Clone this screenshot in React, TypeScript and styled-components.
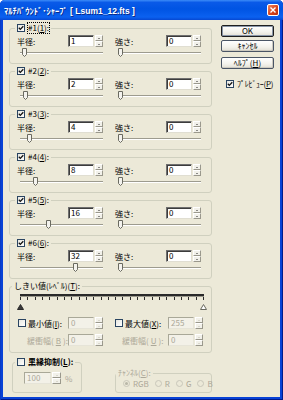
import React from "react";
import styled, { createGlobalStyle } from "styled-components";

const GlobalStyle = createGlobalStyle`
  html, body {
    margin: 0;
    padding: 0;
    background: #ffffff;
  }
  body {
    font-family: "Noto Sans CJK JP", "Liberation Sans", sans-serif;
    font-size: 8px;
    color: #000;
  }
`;

const FACE = "#ECE9D8";
const GREY_TEXT = "#ACA899";

const Window = styled.div`
  width: 283px;
  height: 400px;
  box-sizing: border-box;
  display: flex;
  flex-direction: column;
  border-radius: 5px 5px 0 0;
  overflow: hidden;
  background: #0842d6;
  box-shadow: inset 1px 0 #0a3bc4, inset -1px 0 #001b8c, inset 0 -1px #001b8c;
`;

const TitleBar = styled.div`
  height: 20px;
  flex: none;
  display: flex;
  align-items: center;
  padding: 0 4px 0 4px;
  background: linear-gradient(
    to bottom,
    #3c8cf8 0%,
    #0a5ae8 12%,
    #0054e3 45%,
    #0b61f0 85%,
    #0648d2 100%
  );
`;

const Title = styled.span`
  flex: 1;
  color: #fff;
  font-family: "Liberation Sans", "Noto Sans CJK JP", sans-serif;
  font-weight: bold;
  font-size: 8.5px;
  white-space: nowrap;
  text-shadow: 1px 1px #0a2a8a;
`;

const CloseButton = styled.div`
  width: 12px;
  height: 12px;
  box-sizing: border-box;
  margin-top: -1px;
  border: 1px solid #fff;
  border-radius: 2px;
  background: linear-gradient(to bottom right, #f08660, #d9451c 55%, #b8300e);
  display: flex;
  align-items: center;
  justify-content: center;
`;

const Client = styled.div`
  flex: 1;
  display: flex;
  margin: 0 3px 3px 3px;
  background: ${FACE};
`;

const LeftColumn = styled.div`
  width: 203px;
  margin-left: 6px;
  padding-top: 3px;
  display: flex;
  flex-direction: column;
  gap: 2px;
`;

const RightColumn = styled.div`
  width: 53px;
  margin-left: 9px;
  padding-top: 5px;
  display: flex;
  flex-direction: column;
`;

const Group = styled.div<{ $pl?: number; $pr?: number; $pb?: number; $w?: number }>`
  border: 1px solid #d0d0bf;
  border-radius: 3px;
  margin-top: 5px;
  padding: 0 ${(p) => p.$pr ?? 10}px ${(p) => p.$pb ?? 6}px ${(p) => p.$pl ?? 7}px;
  display: flex;
  flex-direction: column;
  ${(p) => (p.$w ? `width: ${p.$w}px; box-sizing: border-box;` : "")}
`;

const Legend = styled.div<{ $ml?: number; $disabled?: boolean; $bold?: boolean }>`
  align-self: flex-start;
  display: flex;
  align-items: center;
  gap: 3px;
  height: 10px;
  line-height: 10px;
  padding: 0 2px;
  margin: -6px 0 0 ${(p) => p.$ml ?? -2}px;
  background: ${FACE};
  color: ${(p) => (p.$disabled ? GREY_TEXT : "#000")};
  font-weight: ${(p) => (p.$bold ? "bold" : "normal")};
  white-space: nowrap;
`;

const LegendText = styled.span<{ $focus?: boolean }>`
  outline: ${(p) => (p.$focus ? "1px dotted #000" : "none")};
  outline-offset: 0;
`;

const Box = styled.span<{ $disabled?: boolean }>`
  width: 8px;
  height: 8px;
  flex: none;
  box-sizing: border-box;
  border: 1px solid ${(p) => (p.$disabled ? "#c9c7ba" : "#2a4461")};
  background: ${(p) => (p.$disabled ? FACE : "linear-gradient(135deg, #e6e6e0, #ffffff)")};
  display: flex;
  align-items: center;
  justify-content: center;
`;

function CheckBox({ checked, disabled }: { checked?: boolean; disabled?: boolean }) {
  return (
    <Box $disabled={disabled}>
      {checked && (
        <svg width="6" height="6" viewBox="0 0 6 6">
          <path d="M0.8 2.8 L2.3 4.4 L5.3 1.2" fill="none" stroke="#111" strokeWidth="1.3" />
        </svg>
      )}
    </Box>
  );
}

const Row = styled.div<{ $mt?: number; $gap?: number }>`
  display: flex;
  gap: ${(p) => p.$gap ?? 12}px;
  margin-top: ${(p) => p.$mt ?? 2}px;
  height: 12px;
`;

const Field = styled.div`
  display: flex;
  align-items: center;
`;

const FieldLabel = styled.span<{ $w: number; $pl?: number; $disabled?: boolean }>`
  width: ${(p) => p.$w}px;
  box-sizing: border-box;
  padding-left: ${(p) => p.$pl ?? 0}px;
  display: flex;
  align-items: center;
  gap: 2px;
  white-space: nowrap;
  color: ${(p) => (p.$disabled ? GREY_TEXT : "#000")};
`;

const TextBox = styled.div<{ $disabled?: boolean; $w?: number }>`
  width: ${(p) => p.$w ?? 26}px;
  height: 12px;
  box-sizing: border-box;
  border: 1px solid;
  border-color: ${(p) =>
    p.$disabled ? "#a9a898 #e6e4d8 #e6e4d8 #a9a898" : "#6f6f6f #e0ded2 #e0ded2 #6f6f6f"};
  box-shadow: ${(p) => (p.$disabled ? "none" : "inset 1px 1px #3c3c3c")};
  background: ${(p) => (p.$disabled ? "#f3f1e8" : "#fff")};
  color: ${(p) => (p.$disabled ? GREY_TEXT : "#000")};
  padding-left: 2px;
  line-height: 10px;
  font-size: 8px;
`;

const SpinBox = styled.div<{ $w?: number }>`
  width: ${(p) => p.$w ?? 8}px;
  height: 12px;
  margin-left: 1px;
  display: flex;
  flex-direction: column;
`;

const SpinButton = styled.div`
  flex: 1;
  box-sizing: border-box;
  border: 1px solid;
  border-color: #ffffff #9a988c #9a988c #ffffff;
  background: #f2f1ea;
  display: flex;
  align-items: center;
  justify-content: center;
`;

const Arrow = styled.span<{ $up?: boolean; $disabled?: boolean }>`
  width: 0;
  height: 0;
  border-left: 1px solid transparent;
  border-right: 1px solid transparent;
  ${(p) =>
    p.$up
      ? `border-bottom: 1px solid ${p.$disabled ? "#c0bead" : "#222"};`
      : `border-top: 1px solid ${p.$disabled ? "#c0bead" : "#222"};`}
`;

function Spin({ disabled, w }: { disabled?: boolean; w?: number }) {
  return (
    <SpinBox $w={w}>
      <SpinButton>
        <Arrow $up $disabled={disabled} />
      </SpinButton>
      <SpinButton>
        <Arrow $disabled={disabled} />
      </SpinButton>
    </SpinBox>
  );
}

const SliderRow = styled.div`
  display: flex;
  gap: 15px;
  height: 10px;
  padding-left: 3px;
`;

const Slider = styled.div`
  position: relative;
  width: 83px;
  height: 10px;
`;

const Track = styled.div`
  margin-top: 5px;
  height: 2px;
  box-sizing: border-box;
  border-top: 1px solid #9d9b8e;
  border-bottom: 1px solid #ffffff;
`;

const Thumb = styled.svg`
  position: absolute;
  top: 1px;
`;

function TrackBar({ value }: { value: number }) {
  return (
    <Slider>
      <Track />
      <Thumb width="5" height="9" viewBox="0 0 5 9" style={{ left: value * 1.645 }}>
        <path d="M0.5 0.5 H4.5 V6.5 L2.5 8.5 L0.5 6.5 Z" fill="#f4f3ee" stroke="#6a6a60" />
      </Thumb>
    </Slider>
  );
}

const Ruler = styled.div`
  position: relative;
  width: 184px;
  height: 20px;
  margin-left: 3px;
`;

const RulerTrack = styled.div`
  margin-top: 3px;
  height: 2px;
  background: #2a2a2a;
  border-bottom: 1px solid #9a988c;
`;

const RulerTicks = styled.div`
  height: 3px;
  background: repeating-linear-gradient(
    to right,
    #2a2a2a 0,
    #2a2a2a 1px,
    transparent 1px,
    transparent 7.32px
  );
  border-right: 1px solid #2a2a2a;
`;

const RulerThumb = styled.svg`
  position: absolute;
  top: 13px;
`;

const BottomRow = styled.div`
  display: flex;
  align-items: flex-end;
  justify-content: space-between;
  margin-top: 2px;
`;

const Percent = styled.span`
  margin-left: 4px;
  color: ${GREY_TEXT};
`;

const RadioRow = styled.div`
  display: flex;
  align-items: center;
  gap: 6px;
  margin-top: 1px;
  height: 8px;
`;

const RadioItem = styled.span`
  display: flex;
  align-items: center;
  gap: 3px;
  color: ${GREY_TEXT};
`;

const RadioCircle = styled.span<{ $on?: boolean }>`
  width: 7px;
  height: 7px;
  box-sizing: border-box;
  border-radius: 50%;
  border: 1px solid #c9c7ba;
  background: ${FACE};
  display: flex;
  align-items: center;
  justify-content: center;
  &::after {
    content: "";
    width: 3px;
    height: 3px;
    border-radius: 50%;
    background: ${(p) => (p.$on ? "#b9b7a8" : "transparent")};
  }
`;

const Button = styled.div<{ $default?: boolean; $mt?: number }>`
  height: 12px;
  box-sizing: border-box;
  margin-top: ${(p) => p.$mt ?? 0}px;
  border: 1px solid ${(p) => (p.$default ? "#1e1e1e" : "#4a5566")};
  border-radius: 2px;
  box-shadow: ${(p) => (p.$default ? "inset 0 0 0 1px #8a96a8" : "inset -1px -1px #cdcac0")};
  background: linear-gradient(to bottom, #ffffff, #f3f2ec 60%, #e2dfd4);
  display: flex;
  align-items: center;
  justify-content: center;
  line-height: 10px;
  white-space: nowrap;
`;

const Preview = styled.div`
  display: flex;
  align-items: center;
  gap: 3px;
  margin-top: 9px;
  padding-left: 5px;
  white-space: nowrap;
  letter-spacing: -0.3px;
`;

function SharpGroup({ index, radius, focused }: { index: number; radius: number; focused?: boolean }) {
  return (
    <Group>
      <Legend>
        <CheckBox checked />
        <LegendText $focus={focused}>
          #{index}(<u>{index}</u>):
        </LegendText>
      </Legend>
      <Row>
        <Field>
          <FieldLabel $w={51}>半径:</FieldLabel>
          <TextBox>{radius}</TextBox>
          <Spin />
        </Field>
        <Field>
          <FieldLabel $w={51}>強さ:</FieldLabel>
          <TextBox>0</TextBox>
          <Spin />
        </Field>
      </Row>
      <SliderRow>
        <TrackBar value={radius} />
        <TrackBar value={0} />
      </SliderRow>
    </Group>
  );
}

const radii = [1, 2, 4, 8, 16, 32];

export default function App() {
  return (
    <>
      <GlobalStyle />
      <Window>
        <TitleBar>
          <Title>ﾏﾙﾁﾊﾞｳﾝﾄﾞ･ｼｬｰﾌﾟ [ Lsum1_12.fts ]</Title>
          <CloseButton>
            <svg width="6" height="6" viewBox="0 0 6 6">
              <path d="M0.5 0.5 L5.5 5.5 M5.5 0.5 L0.5 5.5" stroke="#fff" strokeWidth="1.4" />
            </svg>
          </CloseButton>
        </TitleBar>
        <Client>
          <LeftColumn>
            {radii.map((r, i) => (
              <SharpGroup key={r} index={i + 1} radius={r} focused={i === 0} />
            ))}

            <Group $pr={8}>
              <Legend $ml={-5}>
                <span>
                  しきい値(ﾚﾍﾞﾙ)(<u>T</u>):
                </span>
              </Legend>
              <Ruler>
                <RulerTrack />
                <RulerTicks />
                <RulerThumb width="7" height="6" viewBox="0 0 7 6" style={{ left: -3 }}>
                  <path d="M3.5 0.5 L6.5 5.5 H0.5 Z" fill="#3a3a3a" stroke="#2a2a2a" />
                </RulerThumb>
                <RulerThumb width="7" height="6" viewBox="0 0 7 6" style={{ left: 180 }}>
                  <path d="M3.5 0.5 L6.5 5.5 H0.5 Z" fill="#ffffff" stroke="#6a6a60" />
                </RulerThumb>
              </Ruler>
              <Row $mt={6}>
                <Field>
                  <FieldLabel $w={51} $pl={1}>
                    <CheckBox />
                    <span>
                      最小値(<u>I</u>):
                    </span>
                  </FieldLabel>
                  <TextBox $disabled>0</TextBox>
                  <Spin disabled />
                </Field>
                <Field>
                  <FieldLabel $w={53}>
                    <CheckBox />
                    <span>
                      最大値(<u>X</u>):
                    </span>
                  </FieldLabel>
                  <TextBox $disabled>255</TextBox>
                  <Spin disabled />
                </Field>
              </Row>
              <Row $mt={5}>
                <Field>
                  <FieldLabel $w={51} $pl={10} $disabled>
                    緩衝幅(<u>B</u>):
                  </FieldLabel>
                  <TextBox $disabled>0</TextBox>
                  <Spin disabled />
                </Field>
                <Field>
                  <FieldLabel $w={53} $pl={7} $disabled>
                    緩衝幅(<u>U</u>):
                  </FieldLabel>
                  <TextBox $disabled>0</TextBox>
                  <Spin disabled />
                </Field>
              </Row>
            </Group>

            <BottomRow>
              <Group $w={70} $pl={11} $pr={4} $pb={8} style={{ marginLeft: 3 }}>
                <Legend $ml={-9} $bold>
                  <CheckBox />
                  <span>
                    黒縁抑制(<u>L</u>):
                  </span>
                </Legend>
                <Row $mt={5} $gap={0}>
                  <Field>
                    <TextBox $disabled $w={27}>
                      100
                    </TextBox>
                    <Spin disabled w={9} />
                    <Percent>%</Percent>
                  </Field>
                </Row>
              </Group>
              <Group $w={97} $pl={7} $pr={4} $pb={5}>
                <Legend $ml={-7} $disabled>
                  <span>
                    ﾁｬﾝﾈﾙ(<u>C</u>):
                  </span>
                </Legend>
                <RadioRow>
                  <RadioItem>
                    <RadioCircle $on />
                    RGB
                  </RadioItem>
                  <RadioItem>
                    <RadioCircle />R
                  </RadioItem>
                  <RadioItem>
                    <RadioCircle />G
                  </RadioItem>
                  <RadioItem>
                    <RadioCircle />B
                  </RadioItem>
                </RadioRow>
              </Group>
            </BottomRow>
          </LeftColumn>

          <RightColumn>
            <Button $default>OK</Button>
            <Button $mt={3}>ｷｬﾝｾﾙ</Button>
            <Button $mt={5}>
              ﾍﾙﾌﾟ(<u>H</u>)
            </Button>
            <Preview>
              <CheckBox checked />
              <span>
                ﾌﾟﾚﾋﾞｭｰ(<u>P</u>)
              </span>
            </Preview>
          </RightColumn>
        </Client>
      </Window>
    </>
  );
}
